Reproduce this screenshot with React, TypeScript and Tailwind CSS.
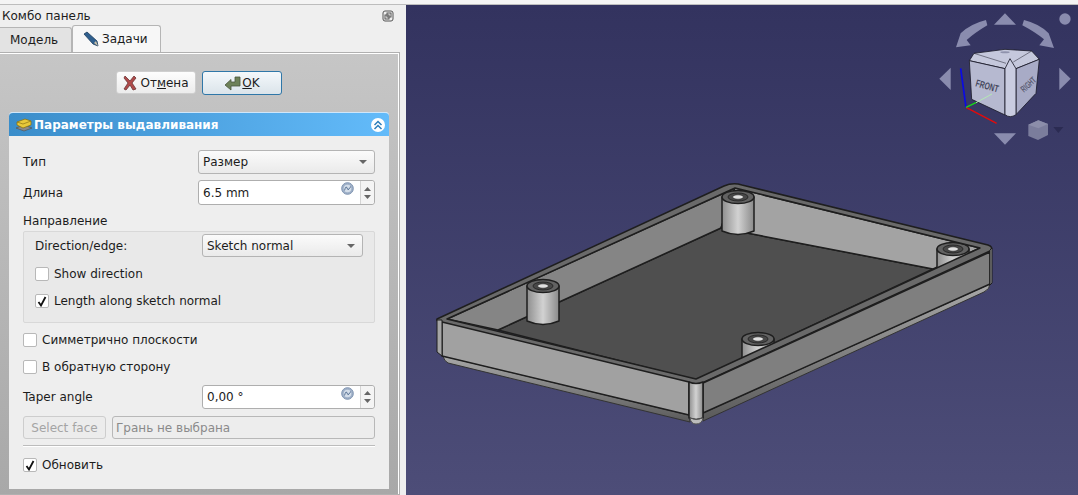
import type { ReactNode } from 'react'

function Chevron({ className = '' }: { className?: string }) {
  return (
    <svg width="8" height="4" viewBox="0 0 8 4" className={className}>
      <path d="M0 0h8L4 4z" fill="#666" />
    </svg>
  )
}

function Combo({ value, className }: { value: string; className: string }) {
  return (
    <div
      className={`flex items-center justify-between rounded-[3px] border border-[#b4b4b4] bg-gradient-to-b from-[#fbfbfb] to-[#eaeaea] pl-[4px] pr-[7px] ${className}`}
    >
      <span>{value}</span>
      <Chevron />
    </div>
  )
}

function SpinInput({ value, className }: { value: string; className: string }) {
  return (
    <div className={`relative flex items-stretch rounded-[3px] border border-[#aeaeae] bg-white ${className}`}>
      <span className="flex flex-1 items-center pl-[4px]">{value}</span>
      <svg width="13" height="13" viewBox="0 0 13 13" className="absolute right-[20px] top-[1px]">
        <circle cx="6.5" cy="6.5" r="5.8" fill="#9fb0c8" stroke="#7d93b0" />
        <circle cx="6.5" cy="6.5" r="3.8" fill="#d3dde9" />
        <path d="M3.5 8.5 Q5 3 6 6 T8 7 T10 4.5" fill="none" stroke="#4f6a8d" strokeWidth="0.9" />
      </svg>
      <div className="flex w-[14px] flex-col items-center justify-center gap-[4px] rounded-r-[3px] border-l border-[#d4d4d4] bg-[#f4f4f4]">
        <svg width="7" height="4" viewBox="0 0 7 4">
          <path d="M0 4h7L3.5 0z" fill="#666" />
        </svg>
        <svg width="7" height="4" viewBox="0 0 7 4">
          <path d="M0 0h7L3.5 4z" fill="#666" />
        </svg>
      </div>
    </div>
  )
}

function Check({ label, checked = false, className = '' }: { label: string; checked?: boolean; className?: string }) {
  return (
    <div className={`flex items-center gap-[5px] ${className}`}>
      <span className="flex h-[14px] w-[14px] items-center justify-center rounded-[2px] border border-[#b8b8b8] bg-white">
        {checked && (
          <svg width="10" height="11" viewBox="0 0 10 11">
            <path d="M1.5 6 L4 9.5 L8.5 1" fill="none" stroke="#111" strokeWidth="1.8" />
          </svg>
        )}
      </span>
      <span>{label}</span>
    </div>
  )
}

function Row({ label, children, className = '' }: { label: string; children: ReactNode; className?: string }) {
  return (
    <div className={`flex items-center justify-between ${className}`}>
      <span>{label}</span>
      {children}
    </div>
  )
}

function Standoff({ cx, cy, bottom }: { cx: number; cy: number; bottom: number }) {
  return (
    <g stroke="#1e1e1e" strokeWidth="1.5">
      <path
        d={`M${cx - 16} ${cy} V${bottom - 4} Q${cx} ${bottom + 3} ${cx + 16} ${bottom - 4} V${cy} Z`}
        fill="url(#post)"
      />
      <ellipse cx={cx} cy={cy} rx="16" ry="6.5" fill="#626262" />
      <ellipse cx={cx} cy={cy} rx="10" ry="4" fill="#484848" strokeWidth="0.8" />
      <ellipse cx={cx} cy={cy} rx="5.5" ry="2.2" fill="#e0e0e0" strokeWidth="0.6" />
    </g>
  )
}

function BoxModel() {
  return (
    <g strokeLinejoin="round">
      <defs>
        <linearGradient id="post" x1="0" x2="1" y1="0" y2="0">
          <stop offset="0" stopColor="#8e8e8e" />
          <stop offset="0.5" stopColor="#d2d2d2" />
          <stop offset="1" stopColor="#8a8a8a" />
        </linearGradient>
        <linearGradient id="fillet" x1="0" x2="0" y1="0" y2="1">
          <stop offset="0" stopColor="#a8a8a8" />
          <stop offset="1" stopColor="#5a5a5a" />
        </linearGradient>
      </defs>
      {/* floor and inner walls */}
      <path d="M498 330 L721 228 L933 269 L696 380 Z" fill="#4f4f4f" stroke="#1e1e1e" strokeWidth="1.5" />
      <path d="M447 319 L735 188 L721 228 L498 330 Z" fill="#858585" stroke="#1e1e1e" strokeWidth="1.5" />
      <path d="M735 188 L980 248 L933 269 L721 228 Z" fill="#a3a3a3" stroke="#1e1e1e" strokeWidth="1.5" />
      <Standoff cx={953} cy={249} bottom={285} />
      <Standoff cx={758} cy={339} bottom={375} />
      {/* top rim */}
      <path
        fillRule="evenodd"
        d="M437 319 L724 186 Q733 182 742 185 L988 245 Q994 247 990 251 L700 384 Q696 385 692 384 L441 323 Q436 321 437 319 Z M447 319 L696 379 L980 248 L735 188 Z"
        fill="#6a6a6a"
        stroke="#1e1e1e"
        strokeWidth="1.5"
      />
      <Standoff cx={543} cy={286} bottom={325} />
      <Standoff cx={738} cy={197} bottom={235} />
      {/* outer walls */}
      <path d="M443 356 L689 415 L690 422 L448 363 Q444 361 443 356 Z" fill="url(#fillet)" stroke="#333" strokeWidth="1" />
      <path d="M703 413 L990 284 Q990 289 984 292 L703 421 Z" fill="url(#fillet)" stroke="#333" strokeWidth="1" />
      <path d="M442 322 L689 382 V415 L442 356 Z" fill="#a1a1a1" stroke="#1e1e1e" strokeWidth="1.5" />
      <path d="M437 320 H442 V356 L437 352 Z" fill="#a6a6a6" stroke="#1e1e1e" strokeWidth="1" />
      <path d="M703 383 L990 252 V284 L703 413 Z" fill="#7f7f7f" stroke="#1e1e1e" strokeWidth="1.5" />
      <path d="M990 250 L992 248 V283 L990 285 Z" fill="#9a9a9a" stroke="#1e1e1e" strokeWidth="1" />
      <path d="M689 382 Q696 385 703 382 V418 Q696 421 689 418 Z" fill="url(#post)" stroke="#1e1e1e" strokeWidth="1.5" />
      <path d="M690 418 Q696 421 703 418 Q702 424 696 424 Q691 424 690 418 Z" fill="#bcbcbc" stroke="#555" strokeWidth="1" />
    </g>
  )
}

function NaviCube() {
  return (
    <g transform="translate(930 0) scale(0.3333)">
      <g fill="#8a8cae">
        <path d="M225 40 L192 74 H258 Z" />
        <path d="M225 434 L192 400 H258 Z" />
        <path d="M28 236 L62 203 V270 Z" />
        <path d="M422 236 L388 203 V270 Z" />
        <path d="M78 142 L122 136 L110 120 Q135 98 172 76 L168 60 Q120 72 92 100 Z" />
        <path d="M372 144 L328 136 L342 118 Q315 96 277 76 L282 60 Q330 72 356 100 Z" />
        <circle cx="405" cy="57" r="17" />
      </g>
      <path d="M295 374 L325 361 L354 372 V405 L324 420 L295 408 Z" fill="#7b7d9c" />
      <path d="M295 374 L325 361 L354 372 L325 385 Z" fill="#8c8eaa" />
      <path d="M370 381 H400 L385 399 Z" fill="#2b2b52" />
      <g stroke="#1c1c2a" strokeWidth="2.5" strokeLinejoin="round">
        <path d="M118 182 L132 160 L225 148 L305 153 L328 178 L258 206 L225 206 Z" fill="#c5c8dc" />
        <path d="M118 182 L225 206 V345 L125 298 Z" fill="#b6b9d0" />
        <path d="M258 206 L328 178 L318 280 L258 344 Z" fill="#a8abc6" />
        <path d="M225 206 L240 176 L258 206 V344 Q240 356 225 344 Z" fill="#c9cce0" />
        <path d="M132 160 L228 190 M305 153 L250 186" fill="none" strokeWidth="1.5" />
      </g>
      <ellipse cx="225" cy="157" rx="14" ry="3" fill="#8f92ac" />
      <text
        transform="translate(135 258) rotate(16)"
        fontFamily="'Liberation Sans', sans-serif"
        fontWeight="700"
        fontSize="30"
        textLength="70"
        lengthAdjust="spacingAndGlyphs"
        fill="#45475c"
      >
        FRONT
      </text>
      <text
        transform="translate(282 278) rotate(-42)"
        fontFamily="'Liberation Sans', sans-serif"
        fontWeight="700"
        fontSize="28"
        textLength="52"
        lengthAdjust="spacingAndGlyphs"
        fill="#5c5e75"
      >
        RIGHT
      </text>
      <path d="M108 322 L92 205" stroke="#0a0ae6" strokeWidth="5" fill="none" />
      <path d="M108 322 L200 370" stroke="#e60a0a" strokeWidth="4" fill="none" />
      <path d="M108 322 L138 308" stroke="#18d818" strokeWidth="4" fill="none" />
      <path d="M138 308 L186 282" stroke="#b4e8b4" strokeWidth="3" fill="none" />
    </g>
  )
}

export default function App() {
  return (
    <div className="flex h-[495px] w-[1078px] flex-col overflow-hidden bg-[#efefef] font-['DejaVu_Sans',sans-serif] text-[12px] leading-none text-[#1c1c1c]">
      <div className="h-[5px] shrink-0 border-b border-[#bdbdbd] bg-[#f4f4f4]" />
      <div className="flex min-h-0 flex-1">
        {/* combo panel */}
        <div className="flex w-[406px] shrink-0 flex-col">
          <div className="flex h-[20px] shrink-0 items-center justify-between pl-[2px] pr-[12px] pt-[1px]">
            <span>Комбо панель</span>
            <svg width="12" height="12" viewBox="0 0 12 12" fill="none" stroke="#555" strokeWidth="1">
              <rect x="1" y="1" width="10" height="10" rx="2" />
              <rect x="5" y="3" width="4" height="4" />
              <rect x="3" y="5" width="4" height="4" />
            </svg>
          </div>
          <div className="flex h-[27px] shrink-0 items-end">
            <div className="flex h-[25px] w-[72px] items-center rounded-tr-[3px] border border-b-0 border-l-0 border-[#b5b5b5] bg-[#e3e3e3] pl-[10px]">
              Модель
            </div>
            <div className="flex h-[27px] w-[89px] items-center gap-[3px] rounded-t-[3px] border border-b-0 border-[#b5b5b5] bg-[#f7f7f7] pl-[10px]">
              <svg width="16" height="16" viewBox="0 0 16 16">
                <path d="M1 3 L4 1 L14 10 L15 15 L10 13 Z" fill="#2f5f8e" stroke="#1d3c5c" strokeWidth="0.8" />
                <path d="M11 12 L13 10 L15 15 Z" fill="#c9c0a8" />
              </svg>
              <span>Задачи</span>
            </div>
          </div>
          <div className="flex min-h-0 flex-1 pr-[6px]">
            <div className="min-h-0 flex-1 border border-l-0 border-[#b0b0b0] bg-white pr-px pt-px">
              <div className="flex h-full flex-col bg-gradient-to-b from-[#c6c6c6] to-[#a8a8a8] pl-[9px] pr-[9px]">
                <div className="flex h-[58px] shrink-0 items-start gap-[6px] pl-[107px] pt-[17px]">
                  <div className="flex h-[23px] w-[80px] items-center justify-center gap-[3px] rounded-[3px] border border-[#cfcfcf] bg-gradient-to-b from-[#fdfdfd] to-[#ececec]">
                    <svg width="14" height="16" viewBox="0 0 14 16">
                      <path d="M2 1 L7 6 L11 1 L13 3 L9 8 L13 14 L10 15 L7 10 L3 15 L1 14 L5 8 L1 3 Z" fill="#b04a4a" stroke="#6b3535" strokeWidth="0.8" />
                    </svg>
                    <span>
                      От<span className="underline">м</span>ена
                    </span>
                  </div>
                  <div className="flex h-[24px] w-[80px] items-center justify-center gap-[1px] rounded-[3px] border border-[#2f77a8] bg-gradient-to-b from-[#f4f8fb] to-[#dbe4ea]">
                    <svg width="17" height="15" viewBox="0 0 17 15">
                      <path d="M1 9 L7 3.5 V6 H11 V1 H16 V10 H7 V14 Z" fill="#6d8158" stroke="#4a573e" strokeWidth="0.8" />
                    </svg>
                    <span>
                      <span className="underline">O</span>K
                    </span>
                  </div>
                </div>
                {/* task box */}
                <div className="flex h-[377px] shrink-0 flex-col rounded-t-[4px] bg-[#eeeeee]">
                  <div className="flex h-[24px] shrink-0 items-center justify-between rounded-t-[4px] border-t border-[#cfe6fa] bg-gradient-to-r from-[#3a8dca] to-[#63bbfa] pl-[6px] pr-[4px]">
                    <div className="flex items-center gap-[1px]">
                      <svg width="18" height="16" viewBox="0 0 18 16">
                        <path d="M1 11 L9 14 L17 11 L9 8 Z" fill="#8a8a8a" stroke="#555" strokeWidth="0.7" />
                        <path d="M2 5 L10 2 L16 4 V8 L8 11 L2 8 Z" fill="#e8c93a" stroke="#8c7414" strokeWidth="0.8" />
                        <path d="M2 5 L8 7 L16 4" fill="none" stroke="#8c7414" strokeWidth="0.7" />
                      </svg>
                      <span className="font-bold text-white">Параметры выдавливания</span>
                    </div>
                    <div className="flex h-[14px] w-[14px] items-center justify-center rounded-full bg-white">
                      <svg width="10" height="10" viewBox="0 0 10 10" fill="none" stroke="#2d7fbb" strokeWidth="1.5">
                        <path d="M1.5 5 L5 1.5 L8.5 5" />
                        <path d="M1.5 9 L5 5.5 L8.5 9" />
                      </svg>
                    </div>
                  </div>
                  <div className="flex flex-1 flex-col pl-[14px] pr-[14px] pt-[14px]">
                    <Row label="Тип">
                      <Combo value="Размер" className="h-[24px] w-[177px]" />
                    </Row>
                    <Row label="Длина" className="mt-[6px]">
                      <SpinInput value="6.5 mm" className="h-[25px] w-[177px]" />
                    </Row>
                    <div className="mt-[10px] leading-[12px]">Направление</div>
                    <div className="mt-[4px] flex h-[92px] flex-col rounded-[2px] border border-[#d8d8d8] bg-[#e9e9e9] pl-[11px] pr-[11px] pt-[2px]">
                      <Row label="Direction/edge:">
                        <Combo value="Sketch normal" className="h-[23px] w-[161px]" />
                      </Row>
                      <Check label="Show direction" className="mt-[10px]" />
                      <Check label="Length along sketch normal" checked className="mt-[13px]" />
                    </div>
                    <Check label="Симметрично плоскости" className="mt-[10px]" />
                    <Check label="В обратную сторону" className="mt-[13px]" />
                    <Row label="Taper angle" className="mt-[11px]">
                      <SpinInput value="0,00 °" className="h-[24px] w-[173px]" />
                    </Row>
                    <div className="mt-[7px] flex gap-[6px] text-[#a4a4a4]">
                      <div className="flex h-[23px] w-[83px] items-center justify-center rounded-[3px] border border-[#cdcdcd] bg-[#ececec]">
                        Select face
                      </div>
                      <div className="flex h-[23px] flex-1 items-center rounded-[3px] border border-[#b8b8b8] bg-[#ededed] pl-[3px] text-[#8a8a8a]">
                        Грань не выбрана
                      </div>
                    </div>
                    <div className="mt-[6px] h-[2px] border-t border-[#bcbcbc] bg-white" />
                    <Check label="Обновить" checked className="mt-[11px]" />
                  </div>
                </div>
              </div>
            </div>
          </div>
        </div>
        {/* 3D view */}
        <div className="min-w-0 flex-1 bg-gradient-to-b from-[#33335f] to-[#4d4d78]">
          <svg viewBox="406 5 672 490" className="block h-full w-full">
            <BoxModel />
            <NaviCube />
          </svg>
        </div>
      </div>
    </div>
  )
}
